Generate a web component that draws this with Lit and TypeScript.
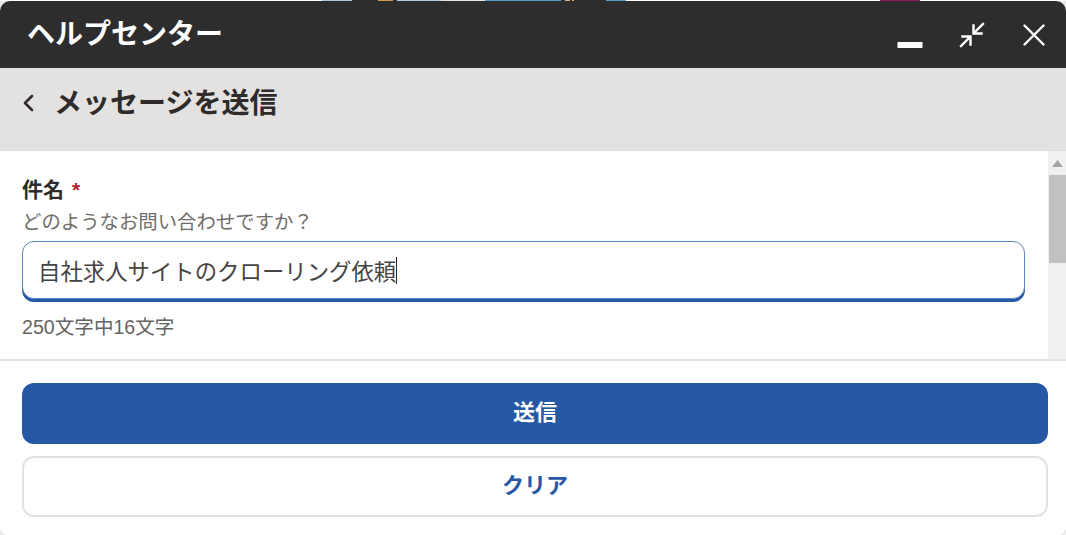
import { LitElement, html, css } from "lit";
import { customElement } from "lit/decorators.js";

const STRIP: [number, string][] = [
  [322, "#ffffff"], [30, "#a9c4dc"], [26, "#2d2d2d"], [15, "#d29a4f"], [4, "#2d2d2d"], [44, "#b5cbe0"],
  [44, "#e4e4e4"], [76, "#5b9ac4"], [4, "#2d2d2d"], [5, "#d9b47e"], [2, "#2d2d2d"], [2, "#d9b47e"],
  [32, "#2d2d2d"], [20, "#5b9ac4"], [254, "#ffffff"], [40, "#8d1f5c"], [146, "#ffffff"],
];

@customElement("app-root")
export class AppRoot extends LitElement {
  static styles = css`
    :host {
      display: block;
      width: 1066px;
      height: 535px;
      overflow: hidden;
      background: #e9e9e9;
      font-family: "Liberation Sans", "Noto Sans CJK JP", sans-serif;
      color: #2b2826;
    }
    .strip { display: flex; height: 1px; background: #fff; }
    .panel {
      display: flex;
      flex-direction: column;
      height: 534px;
      background: #fff;
      border-radius: 10px 10px 8px 8px;
      overflow: hidden;
    }
    .top {
      flex: none;
      height: 67px;
      box-sizing: border-box;
      padding: 0 21px 0 27px;
      display: flex;
      align-items: center;
      background: #2d2d2d;
      color: #fff;
    }
    .top h1 { flex: 1; margin: 0; font-size: 28px; line-height: 1; font-weight: 700; }
    .top svg { display: block; flex: none; }
    .controls { display: flex; align-items: center; }
    .min { margin-right: 36px; }
    .shrink { margin-right: 38px; }
    .sub {
      flex: none;
      height: 83px;
      box-sizing: border-box;
      padding: 20px 0 0 22px;
      display: flex;
      align-items: flex-start;
      background: #e3e2e0;
      border-bottom: 1px solid #dddcda;
    }
    .sub svg { flex: none; margin: 6px 20px 0 0; }
    .sub h2 { margin: 0; font-size: 28px; line-height: 32px; font-weight: 700; color: #2e2b2a; }
    .body { flex: none; height: 208px; display: flex; }
    .form { flex: 1; padding: 26px 23px 0 22px; min-width: 0; }
    .label { font-size: 21px; line-height: 26px; font-weight: 700; color: #2e2b2a; }
    .req { color: #b3202a; margin-left: 8px; }
    .hint { font-size: 19.4px; line-height: 28px; color: #706e6b; margin-top: 5px; }
    .input {
      box-sizing: border-box;
      height: 58px;
      margin-top: 5px;
      padding: 0 15px;
      display: flex;
      align-items: center;
      background: #fff;
      border: 1px solid #5b86c4;
      border-radius: 12px;
      box-shadow: 0 3px 0 #2558a5;
      font-size: 22.4px;
      color: #444;
    }
    .caret { width: 1px; height: 27px; background: #222; flex: none; }
    .count { font-size: 19.6px; line-height: 24px; color: #666462; margin-top: 16px; }
    .scroll { flex: none; width: 18px; background: #f0f0f0; display: flex; flex-direction: column; }
    .arrow { height: 24px; display: flex; align-items: center; justify-content: center; flex: none; }
    .thumb { height: 88px; margin-left: 1px; background: #c1c1c1; flex: none; }
    .foot {
      flex: 1;
      border-top: 2px solid #e2e2e2;
      padding: 22px 18px 0 22px;
      display: flex;
      flex-direction: column;
      gap: 12px;
    }
    .btn {
      box-sizing: border-box;
      height: 61px;
      padding-bottom: 8px;
      border-radius: 12px;
      display: flex;
      align-items: center;
      justify-content: center;
      font-size: 22px;
      font-weight: 700;
    }
    .send { background: #2558a5; color: #fff; }
    .clear { background: #fff; color: #2558a5; border: 2px solid #e2e2e2; }
  `;

  render() {
    return html`
      <div class="strip">
        ${STRIP.map(([w, c]) => html`<span style="width:${w}px;background:${c}"></span>`)}
      </div>
      <div class="panel">
        <header class="top">
          <h1>ヘルプセンター</h1>
          <div class="controls">
            <svg class="min" width="26" height="26" viewBox="0 0 26 26"><rect x="0.5" y="20" width="25" height="6" rx="0.5" fill="#fff"/></svg>
            <svg class="shrink" width="26" height="26" viewBox="0 0 26 26" fill="none" stroke="#fff" stroke-width="2.4" stroke-linecap="square">
              <path d="M24 2 L15.5 10.5 M14.5 3.5 V11.5 H22.5"/>
              <path d="M2 24 L10.5 15.5 M3.5 14.5 H11.5 V22.5"/>
            </svg>
            <svg width="22" height="22" viewBox="0 0 22 22" fill="none" stroke="#fff" stroke-width="2.4" stroke-linecap="round"><path d="M1.5 1.5 L20.5 20.5 M20.5 1.5 L1.5 20.5"/></svg>
          </div>
        </header>
        <section class="sub">
          <svg width="12" height="18" viewBox="0 0 12 18" fill="none" stroke="#2e2b2a" stroke-width="2.6" stroke-linecap="round" stroke-linejoin="round"><path d="M10 2 L3 9 L10 16"/></svg>
          <h2>メッセージを送信</h2>
        </section>
        <section class="body">
          <div class="form">
            <div class="label">件名<span class="req">*</span></div>
            <div class="hint">どのようなお問い合わせですか？</div>
            <div class="input"><span>自社求人サイトのクローリング依頼</span><span class="caret"></span></div>
            <div class="count">250文字中16文字</div>
          </div>
          <div class="scroll">
            <div class="arrow"><svg width="11" height="7" viewBox="0 0 11 7"><path d="M5.5 0 L11 7 H0 Z" fill="#a3a3a3"/></svg></div>
            <div class="thumb"></div>
          </div>
        </section>
        <footer class="foot">
          <div class="btn send">送信</div>
          <div class="btn clear">クリア</div>
        </footer>
      </div>
    `;
  }
}
